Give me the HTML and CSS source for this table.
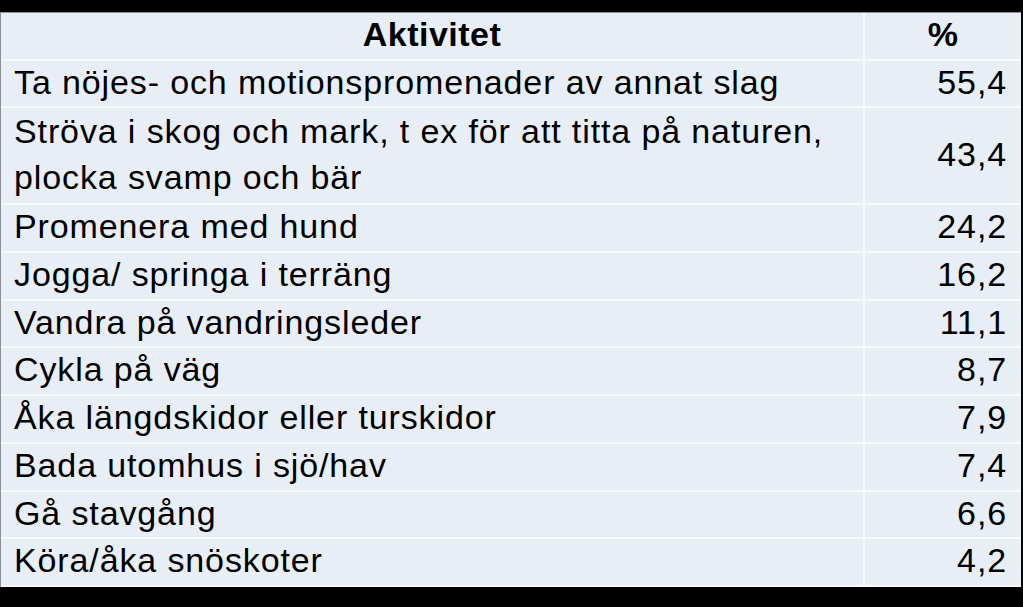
FILE: index.html
```html
<!DOCTYPE html>
<html lang="sv">
<head>
<meta charset="utf-8">
<title>Aktivitet</title>
<link rel="stylesheet" href="styles.css">
</head>
<body>
<table class="stats">
  <colgroup>
    <col class="col-act">
    <col class="col-pct">
  </colgroup>
  <thead>
    <tr>
      <th class="act">Aktivitet</th>
      <th class="pct">%</th>
    </tr>
  </thead>
  <tbody>
    <tr><td class="act">Ta nöjes- och motionspromenader av annat slag</td><td class="pct">55,4</td></tr>
    <tr class="tall"><td class="act">Ströva i skog och mark, t ex för att titta på naturen,<br>plocka svamp och bär</td><td class="pct">43,4</td></tr>
    <tr><td class="act">Promenera med hund</td><td class="pct">24,2</td></tr>
    <tr><td class="act">Jogga/ springa i terräng</td><td class="pct">16,2</td></tr>
    <tr><td class="act">Vandra på vandringsleder</td><td class="pct">11,1</td></tr>
    <tr><td class="act">Cykla på väg</td><td class="pct">8,7</td></tr>
    <tr><td class="act">Åka längdskidor eller turskidor</td><td class="pct">7,9</td></tr>
    <tr><td class="act">Bada utomhus i sjö/hav</td><td class="pct">7,4</td></tr>
    <tr><td class="act">Gå stavgång</td><td class="pct">6,6</td></tr>
    <tr><td class="act">Köra/åka snöskoter</td><td class="pct">4,2</td></tr>
  </tbody>
</table>
</body>
</html>
```

FILE: styles.css
```css
html, body {
  margin: 0;
  padding: 0;
  background: #000;
}

body {
  padding-top: 12px;
  font-family: "Liberation Sans", Arial, sans-serif;
}

.stats {
  border-collapse: separate;
  border-spacing: 0;
  width: 1021px;
  table-layout: fixed;
  border-left: 1px solid #8d9096;
  border-top: 1px solid #8d9096;
  color: #000;
  font-size: 34px;
  letter-spacing: 0.88px;
}

.col-act { width: 864px; }
.col-pct { width: 156px; }

.stats th,
.stats td {
  background: #e8eef6;
  border-bottom: 2px solid #f8fafd;
  line-height: 42px;
  padding: 0 14px 3.7px 13px;
  white-space: nowrap;
  vertical-align: top;
}

.stats th {
  font-weight: bold;
  text-align: center;
  padding-left: 0;
  padding-right: 0;
  letter-spacing: 0.5px;
}

.stats .act {
  border-right: 2px solid #f8fafd;
}

.stats td.act { text-align: left; }
.stats td.pct { text-align: right; }

.stats .tall td {
  line-height: 46px;
  padding-top: 0;
  padding-bottom: 3px;
  vertical-align: middle;
}
```
